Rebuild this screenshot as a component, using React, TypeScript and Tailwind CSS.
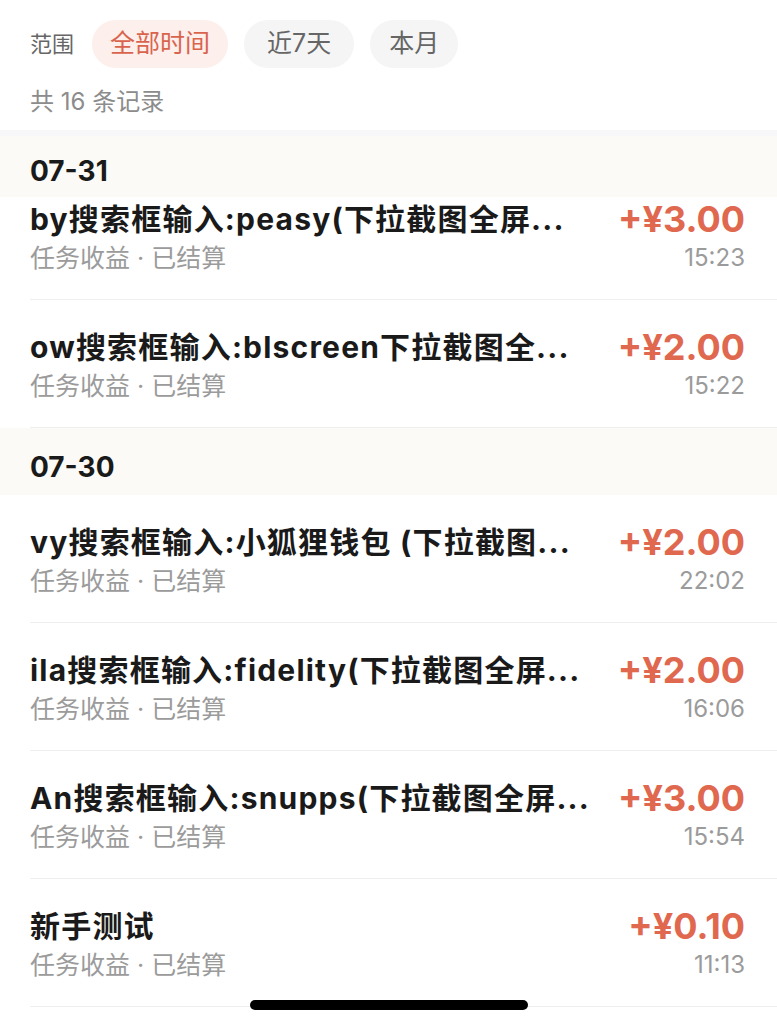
import { FC } from 'react';

type Record = {
  title: string;
  amount: string;
  time: string;
};

type Section = {
  date: string;
  records: Record[];
};

const sections: Section[] = [
  {
    date: '07-31',
    records: [
      { title: 'by搜索框输入:peasy(下拉截图全屏...', amount: '+¥3.00', time: '15:23' },
      { title: 'ow搜索框输入:blscreen下拉截图全...', amount: '+¥2.00', time: '15:22' },
    ],
  },
  {
    date: '07-30',
    records: [
      { title: 'vy搜索框输入:小狐狸钱包 (下拉截图...', amount: '+¥2.00', time: '22:02' },
      { title: 'ila搜索框输入:fidelity(下拉截图全屏...', amount: '+¥2.00', time: '16:06' },
      { title: 'An搜索框输入:snupps(下拉截图全屏...', amount: '+¥3.00', time: '15:54' },
      { title: '新手测试', amount: '+¥0.10', time: '11:13' },
    ],
  },
];

const font = 'font-["Inter","Noto_Sans_CJK_SC",sans-serif]';

const RecordRow: FC<{ record: Record; first?: boolean }> = ({ record, first }) => (
  <div className={`ml-[30px] flex gap-[12px] border-b border-[#efefef] pr-[32px] pb-[26px] ${first ? 'pt-[2px]' : 'pt-[27px]'}`}>
    <div className="min-w-0 flex-1">
      <div className="truncate text-[30px] leading-[40px] font-bold tracking-[1.2px] text-[#1a1a1a]">{record.title}</div>
      <div className="mt-[4px] text-[25px] leading-[30px] text-[#9b9b9b]">任务收益 · 已结算</div>
    </div>
    <div className="shrink-0 text-right">
      <div className="text-[36px] leading-[40px] font-bold text-[#e0684f]">{record.amount}</div>
      <div className="mt-[4px] text-[24px] leading-[30px] text-[#9b9b9b]">{record.time}</div>
    </div>
  </div>
);

export default function App() {
  return (
    <div className={`relative h-[1024px] w-full overflow-hidden bg-white ${font}`}>
      <div className="border-b-[6px] border-[#f7f7f9] px-[30px] pt-[20px] pb-[13px]">
        <div className="flex items-center gap-[16px]">
          <span className="mr-[2px] text-[22px] text-[#666]">范围</span>
          <button className="h-[48px] rounded-full bg-[#fdefeb] px-[18px] text-[25px] text-[#d9644e]">全部时间</button>
          <button className="h-[48px] rounded-full bg-[#f5f5f5] px-[23px] text-[25px] text-[#666]">近7天</button>
          <button className="h-[48px] rounded-full bg-[#f5f5f5] px-[19px] text-[25px] text-[#666]">本月</button>
        </div>
        <div className="mt-[19px] text-[24px] leading-[30px] text-[#8c8c8c]">共 16 条记录</div>
      </div>

      {sections.map((section, si) => (
        <div key={section.date}>
          <div className={`bg-[#fbfaf6] px-[30px] ${si === 0 ? 'pt-[22px] pb-[13px]' : 'pt-[26px] pb-[15px]'}`}>
            <div className="text-[28px] leading-[26px] font-bold text-[#1a1a1a]">{section.date}</div>
          </div>
          {section.records.map((r, ri) => (
            <RecordRow key={ri} record={r} first={si === 0 && ri === 0} />
          ))}
        </div>
      ))}

      <div className="absolute top-[1000px] left-[250px] h-[10px] w-[278px] rounded-full bg-black" />
    </div>
  );
}
